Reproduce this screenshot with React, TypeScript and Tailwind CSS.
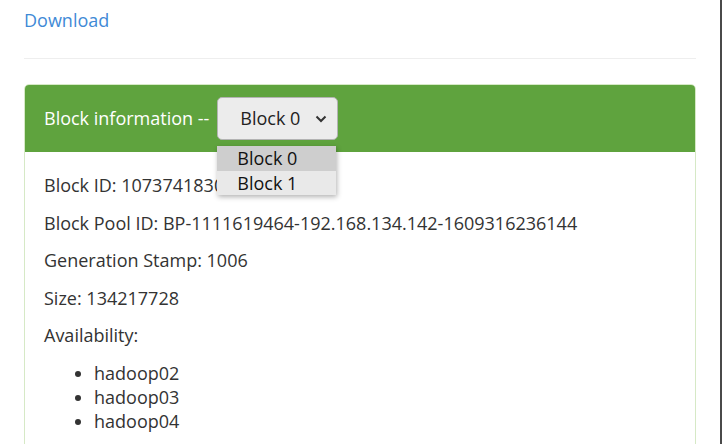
import React from "react";

const hosts = ["hadoop02", "hadoop03", "hadoop04"];

const details = [
    "Block ID: 1073741830",
    "Block Pool ID: BP-1111619464-192.168.134.142-1609316236144",
    "Generation Stamp: 1006",
    "Size: 134217728",
];

function BlockSelect() {
    return (
        <div className="relative inline-block align-middle">
            <div className="flex items-center w-[121px] h-[43px] pl-[22px] pr-[10px] bg-[#ececec] border border-[#b3b3b3] rounded-[5px] text-[#222]">
                <span className="flex-1">Block 0</span>
                <svg width="12" height="8" viewBox="0 0 12 8" className="mt-[1px]">
                    <path d="M1.5 1.5 L6 6 L10.5 1.5" fill="none" stroke="#333" strokeWidth="2" />
                </svg>
            </div>
            <div className="absolute left-0 top-[49px] w-[119px] shadow-[1px_2px_5px_rgba(0,0,0,0.3)] text-[#111]">
                <div className="h-[25px] leading-[25px] pl-[20px] bg-[#cecece]">Block 0</div>
                <div className="h-[24px] leading-[24px] pl-[20px] bg-[#e9e9e9]">Block 1</div>
            </div>
        </div>
    );
}

export default function App() {
    return (
        <div
            className="relative w-[722px] h-[444px] overflow-hidden bg-white text-[#333] text-[18px] leading-[25px]"
            style={{ fontFamily: '"Open Sans", "Noto Sans", sans-serif' }}
        >
            <div className="absolute right-0 top-0 h-full w-[2px] bg-[#4a4a4a]" />
            <div className="pl-[24px] pr-[26px] pt-[8px]">
                <a className="text-[#3f8ad6]" href="#">
                    Download
                </a>
                <hr className="my-[25px] border-0 border-t border-[#eeeeee]" />
                <div className="border border-[#d6e9c6] rounded-[5px]">
                    <div className="flex items-center px-[19px] py-[12px] bg-[#5fa33e] text-white rounded-t-[4px]">
                        <span>Block information --</span>
                        <span className="w-[8px]" />
                        <BlockSelect />
                    </div>
                    <div className="px-[19px] pt-[21px] pb-[19px]">
                        {details.map((d) => (
                            <p key={d} className="mb-[12.5px]">
                                {d}
                            </p>
                        ))}
                        <p className="mb-[13px]">Availability:</p>
                        <ul className="list-disc pl-[50px] mb-[12.5px]">
                            {hosts.map((h) => (
                                <li key={h} className="leading-[24px]">
                                    {h}
                                </li>
                            ))}
                        </ul>
                    </div>
                </div>
            </div>
        </div>
    );
}
